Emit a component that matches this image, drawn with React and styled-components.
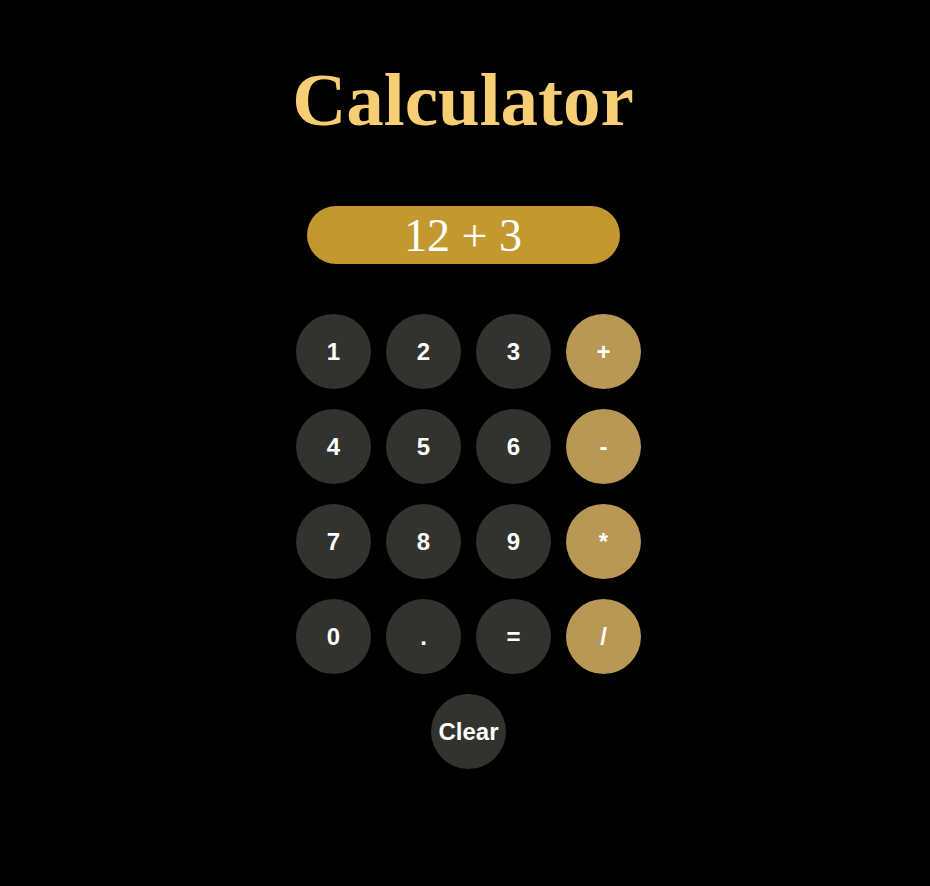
import React, { useState } from "react";
import styled, { createGlobalStyle } from "styled-components";

const GlobalStyle = createGlobalStyle`
  html, body {
    margin: 0;
    padding: 0;
    background: #000;
  }
`;

const Page = styled.div`
  min-height: 886px;
  background: #000;
  display: flex;
  flex-direction: column;
  align-items: center;
  padding-top: 62px;
  box-sizing: border-box;
`;

const Title = styled.h1`
  margin: 0;
  font-family: "Liberation Serif", "Times New Roman", serif;
  font-weight: bold;
  font-size: 75px;
  line-height: 1;
  color: #f7ce73;
  transform: translateX(-2px);
`;

const Display = styled.div`
  margin-top: 69px;
  width: 313px;
  height: 58px;
  border-radius: 29px;
  background: #c2982f;
  color: #fff;
  display: flex;
  align-items: center;
  justify-content: center;
  font-family: "Liberation Serif", "Times New Roman", serif;
  font-size: 46px;
  transform: translateX(-2px);
`;

const Keypad = styled.div`
  margin-top: 50px;
  padding-left: 7px;
  display: flex;
  flex-direction: column;
  align-items: center;
  gap: 20px;
`;

const Grid = styled.div`
  display: grid;
  grid-template-columns: repeat(4, 75px);
  grid-auto-rows: 75px;
  column-gap: 15px;
  row-gap: 20px;
`;

const Key = styled.button`
  width: 75px;
  height: 75px;
  border: none;
  border-radius: 50%;
  padding: 0;
  background: ${(p) => (p.$op ? "#b89854" : "#32322e")};
  color: #fff;
  font-family: "Liberation Sans", Arial, sans-serif;
  font-weight: bold;
  font-size: 24px;
  cursor: pointer;
  display: flex;
  align-items: center;
  justify-content: center;
`;

const keys = [
  ["1", false], ["2", false], ["3", false], ["+", true],
  ["4", false], ["5", false], ["6", false], ["-", true],
  ["7", false], ["8", false], ["9", false], ["*", true],
  ["0", false], [".", false], ["=", false], ["/", true],
];

const App = () => {
  const [expr, setExpr] = useState("12 + 3");

  const press = (k) => {
    if (k === "=") {
      try {
        // eslint-disable-next-line no-new-func
        setExpr(String(Function(`return (${expr})`)()));
      } catch (e) {
        setExpr("Error");
      }
      return;
    }
    if ("+-*/".includes(k)) setExpr(expr + " " + k + " ");
    else setExpr(expr + k);
  };

  return (
    <>
      <GlobalStyle />
      <Page>
        <Title>Calculator</Title>
        <Display>{expr}</Display>
        <Keypad>
          <Grid>
            {keys.map(([k, op]) => (
              <Key key={k} $op={op} onClick={() => press(k)}>
                {k}
              </Key>
            ))}
          </Grid>
          <Key onClick={() => setExpr("")}>Clear</Key>
        </Keypad>
      </Page>
    </>
  );
};

export default App;
